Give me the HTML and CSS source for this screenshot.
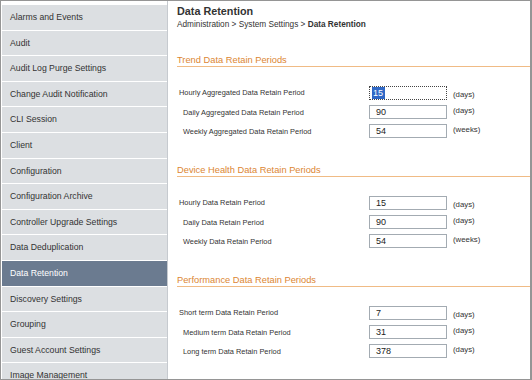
FILE: index.html
```html
<!DOCTYPE html>
<html lang="en">
<head>
  <meta charset="UTF-8" />
  <title>Data Retention</title>
  <link rel="stylesheet" href="styles.css">
</head>
<body>
  <div class="frame">
    <ul class="sidebar">
      <li>Alarms and Events</li>
      <li>Audit</li>
      <li>Audit Log Purge Settings</li>
      <li>Change Audit Notification</li>
      <li>CLI Session</li>
      <li>Client</li>
      <li>Configuration</li>
      <li>Configuration Archive</li>
      <li>Controller Upgrade Settings</li>
      <li>Data Deduplication</li>
      <li class="active">Data Retention</li>
      <li>Discovery Settings</li>
      <li>Grouping</li>
      <li>Guest Account Settings</li>
      <li>Image Management</li>
    </ul>

    <div class="main">
      <div class="title">Data Retention</div>
      <div class="crumb">Administration &gt; System Settings &gt; <b>Data Retention</b></div>

      <div class="section">
        <div class="section-head">Trend Data Retain Periods</div>
        <div class="rows">
          <div class="row">
            <span class="label">Hourly Aggregated Data Retain Period</span>
            <span class="field focus"><span class="sel">15</span></span>
            <span class="unit low">(days)</span>
          </div>
          <div class="row">
            <span class="label sub">Daily Aggregated Data Retain Period</span>
            <span class="field">90</span>
            <span class="unit">(days)</span>
          </div>
          <div class="row">
            <span class="label sub">Weekly Aggregated Data Retain Period</span>
            <span class="field">54</span>
            <span class="unit">(weeks)</span>
          </div>
        </div>
      </div>

      <div class="section">
        <div class="section-head">Device Health Data Retain Periods</div>
        <div class="rows">
          <div class="row">
            <span class="label">Hourly Data Retain Period</span>
            <span class="field">15</span>
            <span class="unit low">(days)</span>
          </div>
          <div class="row">
            <span class="label sub">Daily Data Retain Period</span>
            <span class="field">90</span>
            <span class="unit">(days)</span>
          </div>
          <div class="row">
            <span class="label sub">Weekly Data Retain Period</span>
            <span class="field">54</span>
            <span class="unit">(weeks)</span>
          </div>
        </div>
      </div>

      <div class="section">
        <div class="section-head">Performance Data Retain Periods</div>
        <div class="rows">
          <div class="row">
            <span class="label">Short term Data Retain Period</span>
            <span class="field">7</span>
            <span class="unit low">(days)</span>
          </div>
          <div class="row">
            <span class="label sub">Medium term Data Retain Period</span>
            <span class="field">31</span>
            <span class="unit">(days)</span>
          </div>
          <div class="row">
            <span class="label sub">Long term Data Retain Period</span>
            <span class="field">378</span>
            <span class="unit">(days)</span>
          </div>
        </div>
      </div>
    </div>
  </div>
</body>
</html>
```

FILE: styles.css
```css
body {
  margin: 0;
  font-family: 'Liberation Sans', Arial, sans-serif;
  color: #333;
  background: #fff;
}

.frame {
  width: 532px;
  height: 380px;
  box-sizing: border-box;
  border: 1px solid #959595;
  border-right-width: 2px;
  display: flex;
  overflow: hidden;
}

.sidebar {
  list-style: none;
  margin: 0;
  padding: 4px 0 0 1px;
  width: 165px;
  flex: none;
  border-right: 1px solid #c6cacf;
}

.sidebar li {
  height: 24.6px;
  line-height: 24.6px;
  padding-left: 8px;
  border-bottom: 1px solid #fff;
  background: #dcdfe2;
  font-size: 8.7px;
  color: #333;
  white-space: nowrap;
}

.sidebar li.active {
  background: #6b7b90;
  color: #fff;
}

.main {
  flex: 1;
  padding: 3px 0 0 9px;
}

.title {
  font-size: 10.8px;
  font-weight: bold;
  line-height: 14px;
}

.crumb {
  margin-top: 1px;
  font-size: 8.25px;
  line-height: 12px;
}

.section-head {
  margin-top: 23px;
  font-size: 9.3px;
  line-height: 12px;
  color: #dc8633;
  border-bottom: 1px solid #f0bb85;
}

.section + .section .section-head {
  margin-top: 24px;
}

.rows {
  padding-top: 16px;
}

.row {
  height: 19px;
  display: flex;
  align-items: center;
  font-size: 7.4px;
}

.label {
  width: 190px;
  padding-left: 2px;
  white-space: nowrap;
}

.label.sub {
  width: 186px;
  padding-left: 6px;
  padding-top: 2px;
}

.field {
  width: 78px;
  height: 14px;
  box-sizing: border-box;
  border: 1px solid #a3abb2;
  padding-left: 6px;
  line-height: 12px;
  font-size: 9px;
  color: #222;
}

.field.focus {
  border: 1px dotted #444;
  padding-left: 2px;
}

.sel {
  display: inline-block;
  background: #3169c6;
  color: #fff;
  padding: 0 2px 0 1px;
}

.unit {
  margin-left: 6px;
  font-size: 7.8px;
  padding-bottom: 2px;
}

.unit.low {
  padding-bottom: 0;
  padding-top: 3px;
}
```
